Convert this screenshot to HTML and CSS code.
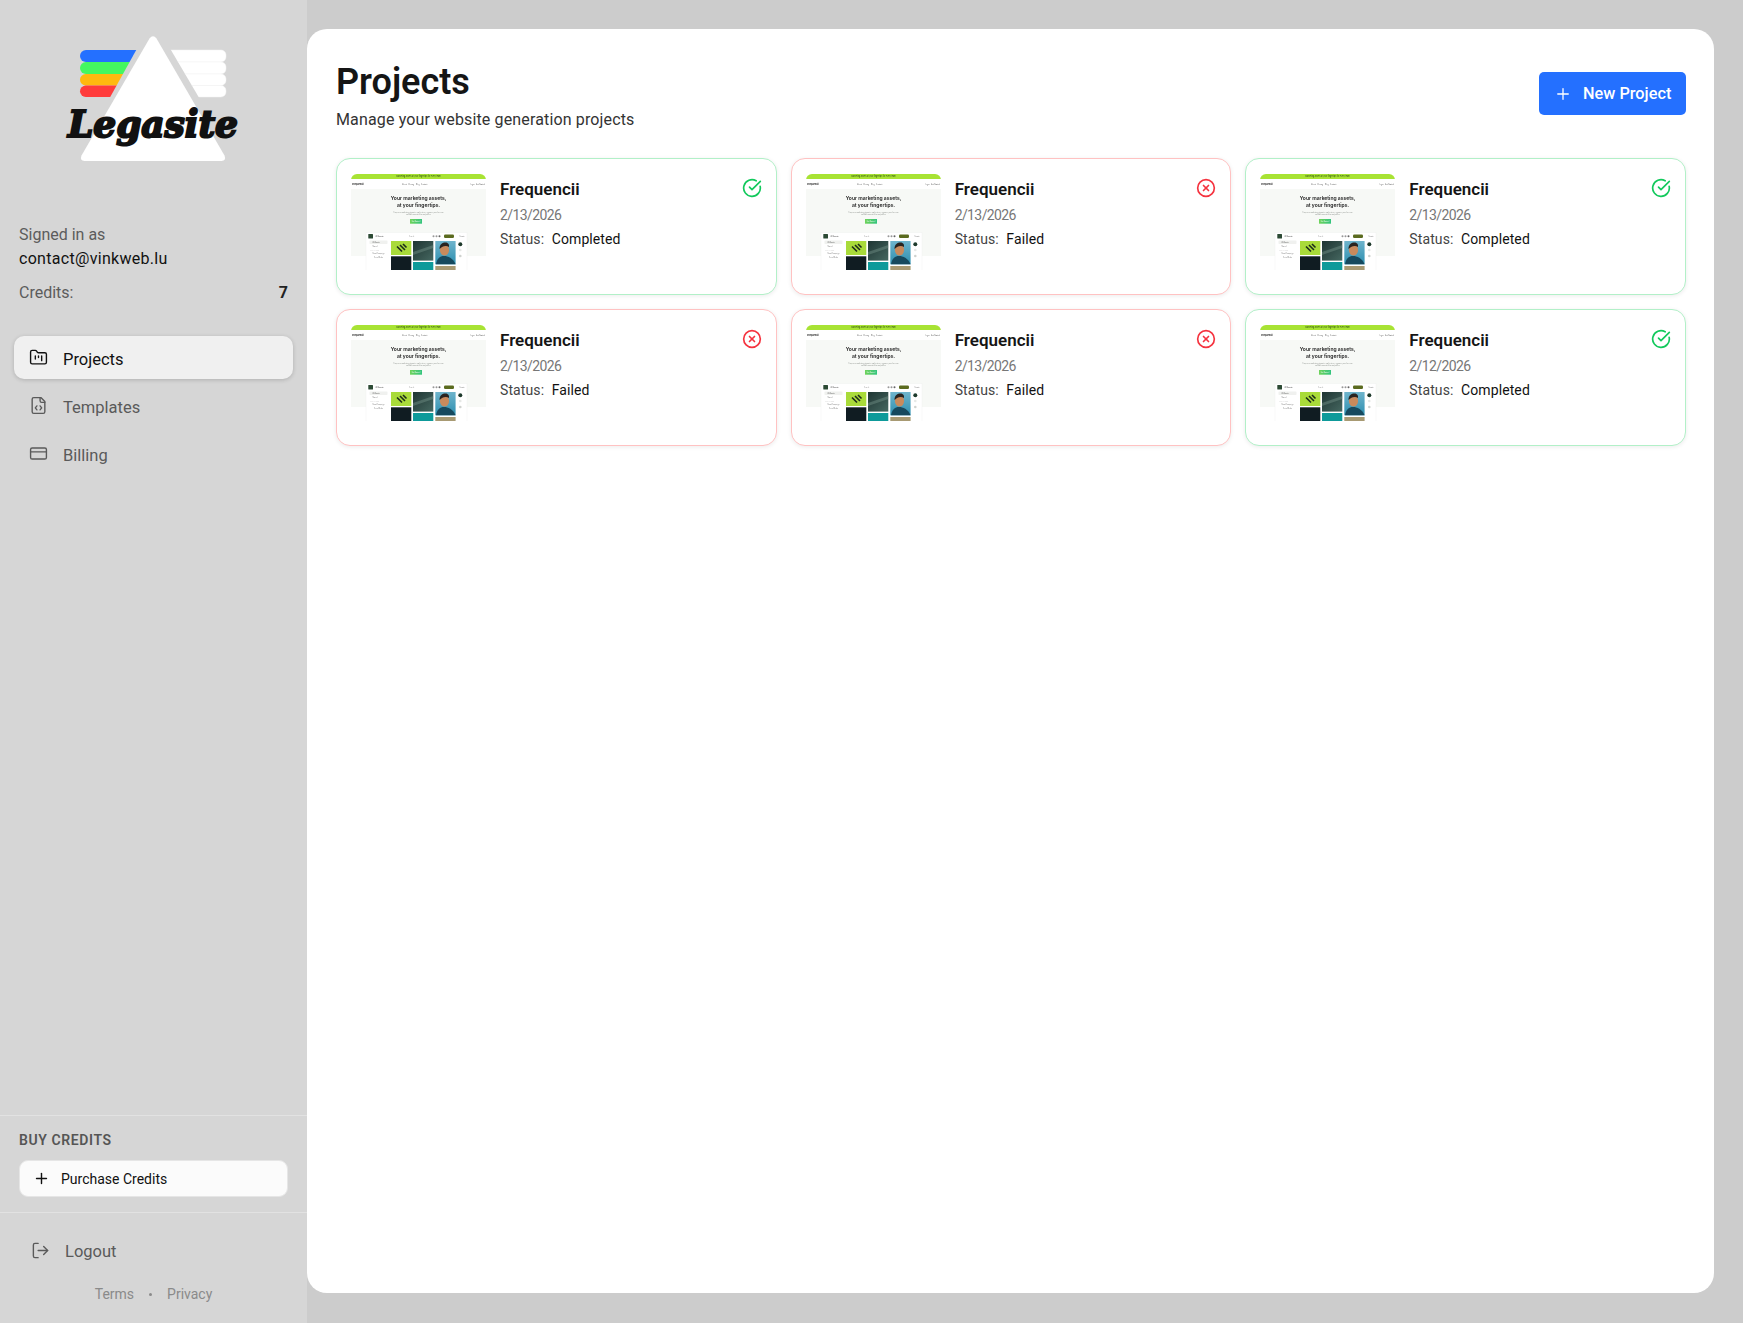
FILE: index.html
```html
<!DOCTYPE html>
<html lang="en">
<head>
  <meta charset="UTF-8" />
  <title>Projects - Legasite</title>
  <link rel="stylesheet" href="styles.css">
</head>
<body>
  <!-- shared icons and gradients -->
  <svg class="sprite" xmlns="http://www.w3.org/2000/svg">
    <symbol id="i-folder" viewBox="0 0 24 24"><path d="M4 20h16a2 2 0 0 0 2-2V8a2 2 0 0 0-2-2h-7.93a2 2 0 0 1-1.66-.9l-.82-1.2A2 2 0 0 0 7.93 3H4a2 2 0 0 0-2 2v13c0 1.1.9 2 2 2Z"/><path d="M8 10v4"/><path d="M12 10v2"/><path d="M16 10v6"/></symbol>
    <symbol id="i-file" viewBox="0 0 24 24"><path d="M10 12.5 8 15l2 2.5"/><path d="m14 12.5 2 2.5-2 2.5"/><path d="M14 2v4a2 2 0 0 0 2 2h4"/><path d="M15 2H6a2 2 0 0 0-2 2v16a2 2 0 0 0 2 2h12a2 2 0 0 0 2-2V7z"/></symbol>
    <symbol id="i-card" viewBox="0 0 24 24"><rect x="2" y="5" width="20" height="14" rx="2"/><path d="M2 10h20"/></symbol>
    <symbol id="i-logout" viewBox="0 0 24 24"><path d="M9 21H5a2 2 0 0 1-2-2V5a2 2 0 0 1 2-2h4"/><path d="m16 17 5-5-5-5"/><path d="M21 12H9"/></symbol>
    <symbol id="i-plus" viewBox="0 0 24 24"><path d="M5 12h14"/><path d="M12 5v14"/></symbol>
    <symbol id="i-ok" viewBox="0 0 24 24"><path d="M21.801 10A10 10 0 1 1 17 3.335"/><path d="m9 11 3 3L22 4"/></symbol>
    <symbol id="i-fail" viewBox="0 0 24 24"><circle cx="12" cy="12" r="10"/><path d="m15 9-6 6"/><path d="m9 9 6 6"/></symbol>

    <linearGradient id="portrait" x1="0" y1="0" x2="0" y2="1">
      <stop offset="0" stop-color="#6fb4cc"/><stop offset="1" stop-color="#2d8fb0"/>
    </linearGradient>
    <linearGradient id="glass" x1="0" y1="0" x2="1" y2="1">
      <stop offset="0" stop-color="#1f3533"/><stop offset="1" stop-color="#456760"/>
    </linearGradient>
    <linearGradient id="cta" x1="0" y1="0" x2="1" y2="0">
      <stop offset="0" stop-color="#6fd35a"/><stop offset="1" stop-color="#33c47e"/>
    </linearGradient>
    <clipPath id="thumb-clip"><path d="M0 96V6a6 6 0 0 1 6-6h123a6 6 0 0 1 6 6v90z"/></clipPath>
    <clipPath id="stripes-left"><path d="M70 45h69l-31 56H70z"/></clipPath>
    <clipPath id="stripes-right"><path d="M168 45h62v56h-29z"/></clipPath>
  </svg>

  <div class="app">
    <aside class="sidebar">
      <div class="logo">
        <svg viewBox="0 0 307 180" width="307" height="180">
          <g clip-path="url(#stripes-left)">
            <rect x="80" y="50" width="70" height="12" rx="6" fill="#2470ff"/>
            <rect x="80" y="62" width="70" height="12" rx="6" fill="#44f760"/>
            <rect x="80" y="74" width="70" height="11.500" rx="5.750" fill="#ffb90f"/>
            <rect x="80" y="85.500" width="70" height="11.500" rx="5.750" fill="#ff3b3b"/>
          </g>
          <g clip-path="url(#stripes-right)" fill="#fff" stroke="#f3f3f3" stroke-width=".5">
            <rect x="160" y="50" width="66" height="12" rx="5"/>
            <rect x="160" y="62" width="66" height="12" rx="5"/>
            <rect x="160" y="74" width="66" height="11.500" rx="5"/>
            <rect x="160" y="85.500" width="66" height="11.500" rx="5"/>
          </g>
          <path d="M149.500 38.500q3.500-4.500 7 0l68 117q2 5-3 5.500h-137q-5-.5-3-5.500z" fill="#fff"/>
          <text class="logo-word" x="68" y="137" textLength="170" lengthAdjust="spacingAndGlyphs">Legasite</text>
        </svg>
      </div>

      <div class="account">
        <div class="account-label">Signed in as</div>
        <div class="account-email">contact@vinkweb.lu</div>
        <div class="credits">
          <span class="account-label">Credits:</span>
          <span class="credits-count">7</span>
        </div>
      </div>

      <nav class="nav">
        <a class="nav-item active"><svg class="icon"><use href="#i-folder"/></svg>Projects</a>
        <a class="nav-item"><svg class="icon"><use href="#i-file"/></svg>Templates</a>
        <a class="nav-item"><svg class="icon"><use href="#i-card"/></svg>Billing</a>
      </nav>

      <div class="buy">
        <div class="buy-title">BUY CREDITS</div>
        <button class="buy-btn"><svg class="icon"><use href="#i-plus"/></svg>Purchase Credits</button>
      </div>

      <div class="foot">
        <a class="logout"><svg class="icon"><use href="#i-logout"/></svg>Logout</a>
        <div class="legal"><span>Terms</span><i></i><span>Privacy</span></div>
      </div>
    </aside>

    <main class="main">
      <header class="head">
        <div>
          <h1>Projects</h1>
          <p>Manage your website generation projects</p>
        </div>
        <button class="new-btn"><svg class="icon"><use href="#i-plus"/></svg>New Project</button>
      </header>

      <section class="grid">
        <article class="card ok">
          <!-- the preview is drawn once here, the other cards reuse it -->
          <svg class="thumb" viewBox="0 0 135 96">
            <g id="preview" clip-path="url(#thumb-clip)" font-family="Inter, sans-serif">
              <rect width="135" height="96" fill="#fff"/>
              <rect width="135" height="5" fill="#a8e334"/>
              <text x="67.500" y="3.300" font-size="1.900" fill="#2c4a10" text-anchor="middle">Marketing assets at your fingertips for every team</text>
              <text x="1" y="10.800" font-size="2.300" font-weight="700" fill="#222">Frequencii</text>
              <text x="51" y="10.600" font-size="1.700" fill="#555">About</text>
              <text x="57.500" y="10.600" font-size="1.700" fill="#555">Pricing</text>
              <text x="65" y="10.600" font-size="1.700" fill="#555">Blog</text>
              <text x="70" y="10.600" font-size="1.700" fill="#555">Contact</text>
              <text x="119" y="10.600" font-size="1.700" fill="#555">Login</text>
              <text x="125" y="10.600" font-size="1.700" fill="#555">Get Started</text>

              <rect y="15" width="135" height="67" fill="#f7f9f6"/>
              <text x="67.500" y="26" font-size="5" font-weight="600" fill="#1a1a1a" text-anchor="middle">Your marketing assets,</text>
              <text x="67.500" y="33" font-size="5" font-weight="600" fill="#1a1a1a" text-anchor="middle">at your fingertips.</text>
              <text x="67.500" y="38.500" font-size="1.700" fill="#8a8f8a" text-anchor="middle">Empower marketing team to easily store, organize, and access</text>
              <text x="67.500" y="41" font-size="1.700" fill="#8a8f8a" text-anchor="middle">valuable assets from anywhere</text>
              <rect x="59" y="45" width="12" height="4.700" fill="url(#cta)"/>
              <text x="65" y="48" font-size="1.600" fill="#fff" text-anchor="middle">Get Started</text>

              <rect x="15" y="58.500" width="101" height="38" fill="#fff" stroke="#e8ebe8" stroke-width=".3"/>
              <rect x="17.300" y="60" width="4.700" height="4.600" rx=".6" fill="#2c4a34"/>
              <text x="24.500" y="63" font-size="1.700" fill="#333">All Assets</text>
              <text x="58" y="63" font-size="1.600" fill="#999">Search</text>
              <circle cx="82.500" cy="62.300" r="1" fill="#999"/><circle cx="85.500" cy="62.300" r="1" fill="#999"/><circle cx="88.500" cy="62.300" r="1" fill="#666"/>
              <rect x="93" y="60.500" width="10" height="3.400" rx="1.200" fill="#5b6b1f"/>
              <text x="108.500" y="63" font-size="1.600" fill="#666">Create</text>

              <rect x="18.500" y="66.500" width="18" height="3.400" rx=".6" fill="#f0f1ef"/>
              <text x="21.500" y="68.800" font-size="1.500" fill="#444">All Assets</text>
              <text x="21.500" y="72.800" font-size="1.500" fill="#777">Shared</text>
              <text x="19" y="76.500" font-size="1.300" fill="#bbb">COLLECTIONS</text>
              <text x="21.500" y="80.300" font-size="1.500" fill="#777">Brand Campaign</text>
              <text x="23" y="84" font-size="1.500" fill="#777">Social Media</text>

              <rect x="40" y="67" width="20.300" height="14" fill="#a9db3a"/>
              <path d="M46 72.500l5 5M49 71l5 5M52 70l3.500 3.500" stroke="#1c2b1a" stroke-width="1.600" fill="none"/>
              <rect x="40" y="82.300" width="20.300" height="14" fill="#101c22"/>
              <rect x="62" y="67" width="20.300" height="19.600" fill="url(#glass)"/>
              <path d="M62 78l20.300-7v3l-20.300 7z" fill="#7d9a92" opacity=".4"/>
              <rect x="62" y="88" width="20.300" height="8" fill="#0e9a9a"/>
              <rect x="84.300" y="67" width="20.300" height="23.300" fill="url(#portrait)"/>
              <ellipse cx="93.500" cy="76" rx="4.600" ry="5.600" fill="#c98a5c"/>
              <path d="M88.500 75c0-5 3-6.500 6-6.500s4 2.500 3.500 4.500c-2-1.500-5-1-7 0z" fill="#2a2420"/>
              <path d="M85 90.300c1-6 4-8.300 8-8.300s9 2 11.600 8.300z" fill="#16495e"/>
              <rect x="84.300" y="92" width="20.300" height="4" fill="#a89a73"/>

              <circle cx="109.300" cy="70.300" r="2" fill="#1e3a2c"/>
              <circle cx="109.300" cy="76" r="1.300" fill="#e6e8e6"/>
              <circle cx="109.300" cy="82" r="1.300" fill="#cfd2cf"/>
            </g>
          </svg>
          <div class="info">
            <h3>Frequencii</h3>
            <div class="date">2/13/2026</div>
            <div class="status">Status: <b>Completed</b></div>
          </div>
          <svg class="state"><use href="#i-ok"/></svg>
        </article>
        <article class="card bad">
          <svg class="thumb" viewBox="0 0 135 96"><use href="#preview"/></svg>
          <div class="info">
            <h3>Frequencii</h3>
            <div class="date">2/13/2026</div>
            <div class="status">Status: <b>Failed</b></div>
          </div>
          <svg class="state"><use href="#i-fail"/></svg>
        </article>
        <article class="card ok">
          <svg class="thumb" viewBox="0 0 135 96"><use href="#preview"/></svg>
          <div class="info">
            <h3>Frequencii</h3>
            <div class="date">2/13/2026</div>
            <div class="status">Status: <b>Completed</b></div>
          </div>
          <svg class="state"><use href="#i-ok"/></svg>
        </article>
        <article class="card bad">
          <svg class="thumb" viewBox="0 0 135 96"><use href="#preview"/></svg>
          <div class="info">
            <h3>Frequencii</h3>
            <div class="date">2/13/2026</div>
            <div class="status">Status: <b>Failed</b></div>
          </div>
          <svg class="state"><use href="#i-fail"/></svg>
        </article>
        <article class="card bad">
          <svg class="thumb" viewBox="0 0 135 96"><use href="#preview"/></svg>
          <div class="info">
            <h3>Frequencii</h3>
            <div class="date">2/13/2026</div>
            <div class="status">Status: <b>Failed</b></div>
          </div>
          <svg class="state"><use href="#i-fail"/></svg>
        </article>
        <article class="card ok">
          <svg class="thumb" viewBox="0 0 135 96"><use href="#preview"/></svg>
          <div class="info">
            <h3>Frequencii</h3>
            <div class="date">2/12/2026</div>
            <div class="status">Status: <b>Completed</b></div>
          </div>
          <svg class="state"><use href="#i-ok"/></svg>
        </article>
      </section>
    </main>
  </div>
</body>
</html>
```

FILE: styles.css
```css
html, body {
  margin: 0;
  padding: 0;
  height: 100%;
  background: #cccccc;
  font-family: Roboto, "Liberation Sans", sans-serif;
  color: #111;
  overflow: hidden;
}

.sprite {
  position: absolute;
  width: 0;
  height: 0;
}

.icon {
  fill: none;
  stroke: currentColor;
  stroke-width: 1.75;
  stroke-linecap: round;
  stroke-linejoin: round;
  flex-shrink: 0;
}

.app {
  display: flex;
  height: 100vh;
}

/* sidebar */
.sidebar {
  width: 307px;
  flex-shrink: 0;
  background: #d6d6d6;
  display: flex;
  flex-direction: column;
}

.logo {
  height: 217px;
}

.logo svg {
  display: block;
}

.logo-word {
  font-family: "DejaVu Serif", serif;
  font-weight: 700;
  font-style: italic;
  font-size: 38px;
  fill: #111;
  stroke: #111;
  stroke-width: 2.2px;
}

.account {
  padding: 6px 19px 0;
  font-size: 16px;
  line-height: 24px;
}

.account-label {
  color: #5c5c5c;
}

.account-email {
  color: #111;
  font-weight: 450;
  letter-spacing: 0.3px;
}

.credits {
  display: flex;
  justify-content: space-between;
  margin-top: 10px;
}

.credits-count {
  font-weight: 700;
  color: #222;
}

.nav {
  display: flex;
  flex-direction: column;
  gap: 5px;
  padding: 31px 14px 0;
}

.nav-item {
  display: flex;
  align-items: center;
  gap: 15px;
  box-sizing: border-box;
  height: 43px;
  padding: 3px 0 0 15px;
  border-radius: 10px;
  font-size: 16.5px;
  font-weight: 450;
  color: #5a5a5a;
}

.nav-item .icon {
  width: 19px;
  height: 19px;
  margin-top: -3px;
}

.nav-item.active {
  background: #f0f0f0;
  color: #111;
  box-shadow: 0 1px 4px rgba(0, 0, 0, 0.18);
}

.buy {
  margin-top: auto;
  border-top: 1px solid #e2e2e2;
  padding: 15px 19px 15px;
}

.buy-title {
  font-size: 14px;
  line-height: 18px;
  font-weight: 600;
  letter-spacing: 0.6px;
  color: #555;
  margin-bottom: 11px;
}

.buy-btn {
  display: flex;
  align-items: center;
  gap: 11px;
  width: 100%;
  height: 37px;
  padding: 0 0 0 13px;
  background: #fbfbfb;
  border: 1px solid #e6e6e6;
  border-radius: 9px;
  font-family: inherit;
  font-size: 14px;
  font-weight: 450;
  color: #111;
}

.buy-btn .icon {
  width: 17px;
  height: 17px;
  stroke-width: 2;
}

.foot {
  border-top: 1px solid #e2e2e2;
  height: 110px;
}

.logout {
  display: flex;
  align-items: center;
  gap: 15px;
  padding: 29px 0 0 31px;
  font-size: 16.5px;
  font-weight: 450;
  color: #5a5a5a;
}

.logout .icon {
  width: 19px;
  height: 19px;
  margin-top: -2px;
}

.legal {
  display: flex;
  justify-content: center;
  align-items: center;
  gap: 15px;
  margin-top: 25px;
  font-size: 14px;
  color: #8a8a8a;
}

.legal i {
  width: 3px;
  height: 3px;
  border-radius: 50%;
  background: #8a8a8a;
}

/* main panel */
.main {
  flex: 1;
  margin: 29px 29px 30px 0;
  padding: 31px 28px 0 29px;
  background: #fff;
  border-radius: 20px;
}

.head {
  display: flex;
  justify-content: space-between;
  align-items: flex-start;
  height: 98px;
}

.head h1 {
  margin: 0;
  font-size: 36px;
  line-height: 44px;
  font-weight: 600;
  color: #151515;
}

.head p {
  margin: 4px 0 0;
  font-size: 16px;
  line-height: 24px;
  letter-spacing: 0.14px;
  color: #333;
}

.new-btn {
  display: flex;
  align-items: center;
  gap: 11px;
  height: 43px;
  width: 147px;
  padding: 0 0 0 15px;
  margin-top: 12px;
  background: #2470ff;
  color: #fff;
  border: none;
  border-radius: 5px;
  font-family: inherit;
  font-size: 16.3px;
  font-weight: 500;
}

.new-btn .icon {
  width: 18px;
  height: 18px;
}

.grid {
  display: grid;
  grid-template-columns: repeat(3, 1fr);
  column-gap: 14px;
  row-gap: 14px;
}

.card {
  display: flex;
  gap: 14px;
  height: 137px;
  box-sizing: border-box;
  padding: 15px 14px 15px 14px;
  background: #fff;
  border: 1px solid;
  border-radius: 14px;
  box-shadow: 0 1px 4px rgba(0, 0, 0, 0.08);
}

.card.ok {
  border-color: #b2f0c8;
}

.card.bad {
  border-color: #ffc2c2;
}

.thumb {
  width: 135px;
  height: 96px;
  flex-shrink: 0;
  filter: blur(0.3px);
}

.info {
  flex: 1;
  min-width: 0;
}

.info h3 {
  margin: 3px 0 0;
  font-size: 17px;
  line-height: 24px;
  font-weight: 600;
  color: #151515;
}

.date {
  margin-top: 4px;
  font-size: 14px;
  line-height: 20px;
  letter-spacing: -0.6px;
  color: #777;
}

.status {
  margin-top: 4px;
  font-size: 14px;
  line-height: 20px;
  letter-spacing: 0.1px;
  color: #444;
}

.status b {
  font-weight: 450;
  color: #111;
  margin-left: 4px;
}

.state {
  width: 20px;
  height: 20px;
  margin: 4px 0 0;
  fill: none;
  stroke-width: 2;
  stroke-linecap: round;
  stroke-linejoin: round;
}

.ok .state {
  stroke: #12c95c;
}

.bad .state {
  stroke: #f5333f;
}
```
